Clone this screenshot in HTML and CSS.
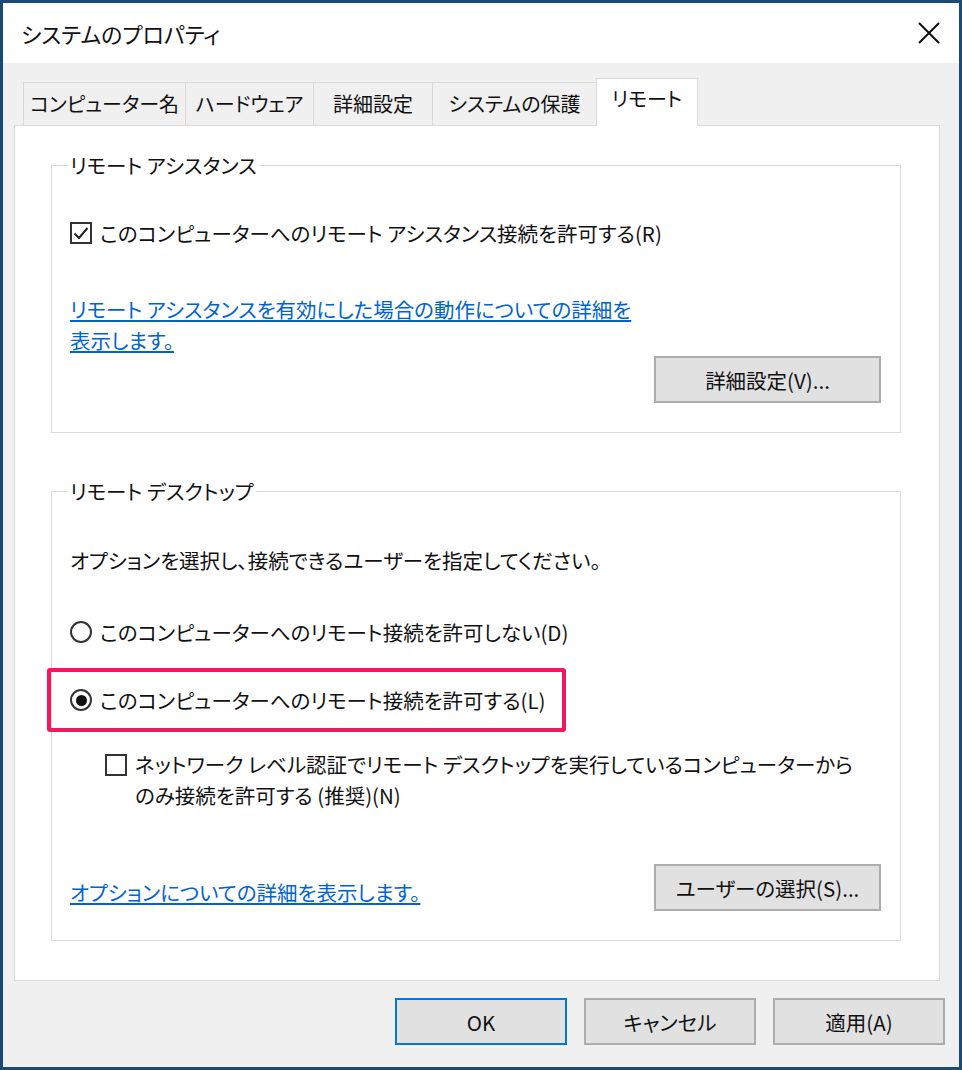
FILE: index.html
```html
<!DOCTYPE html>
<html lang="ja">
<head>
  <meta charset="UTF-8" />
  <title>システムのプロパティ</title>
  <link rel="stylesheet" href="styles.css">
</head>
<body>
  <div class="window">
    <div class="titlebar">
      <span class="title">システムのプロパティ</span>
      <svg class="close" width="24" height="24" viewBox="0 0 24 24">
        <path d="M2 2 L22 22 M22 2 L2 22" stroke="#111" stroke-width="2" fill="none" />
      </svg>
    </div>

    <div class="content">
      <div class="tabs">
        <div class="tab tab-name">コンピューター名</div>
        <div class="tab tab-hw">ハードウェア</div>
        <div class="tab tab-adv">詳細設定</div>
        <div class="tab tab-prot">システムの保護</div>
        <div class="tab tab-remote active">リモート</div>
      </div>

      <div class="panel">
        <fieldset class="group assist">
          <legend>リモート アシスタンス</legend>
          <label class="check-row">
            <span class="checkbox checked">
              <svg width="18" height="18" viewBox="0 0 18 18"><path d="M2.5 9.5 L7 14 L15.5 4" stroke="#222" stroke-width="2" fill="none" /></svg>
            </span>
            このコンピューターへのリモート アシスタンス接続を許可する(R)
          </label>
          <a class="link assist-link" href="#">リモート アシスタンスを有効にした場合の動作についての詳細を<br>表示します。</a>
          <div class="btn-row">
            <button class="btn">詳細設定(V)...</button>
          </div>
        </fieldset>

        <fieldset class="group desktop">
          <legend>リモート デスクトップ</legend>
          <p class="hint">オプションを選択し、接続できるユーザーを指定してください。</p>
          <label class="radio-row">
            <span class="radio"></span>
            このコンピューターへのリモート接続を許可しない(D)
          </label>
          <label class="radio-row marked">
            <span class="radio on"></span>
            このコンピューターへのリモート接続を許可する(L)
          </label>
          <label class="check-row nla">
            <span class="checkbox"></span>
            <span>ネットワーク レベル認証でリモート デスクトップを実行しているコンピューターから<br>のみ接続を許可する (推奨)(N)</span>
          </label>
          <div class="btn-row spread">
            <a class="link" href="#">オプションについての詳細を表示します。</a>
            <button class="btn">ユーザーの選択(S)...</button>
          </div>
        </fieldset>
      </div>

      <div class="footer">
        <button class="btn default">OK</button>
        <button class="btn">キャンセル</button>
        <button class="btn">適用(A)</button>
      </div>
    </div>
  </div>
</body>
</html>
```

FILE: styles.css
```css
* {
  box-sizing: border-box;
}

body {
  margin: 0;
  font-family: 'Noto Sans CJK JP', 'Noto Sans', sans-serif;
  font-feature-settings: 'palt';
  color: #111;
  background: #fff;
}

.window {
  width: 962px;
  height: 1070px;
  border: 3px solid #1b4a74;
  background: #f0f0f0;
  display: flex;
  flex-direction: column;
}

.titlebar {
  height: 60px;
  background: #fff;
  display: flex;
  align-items: center;
  justify-content: space-between;
  padding: 0 18px 0 18px;
}

.title {
  font-size: 22px;
}

.content {
  padding: 16px 19px 0 9px;
}

.tabs {
  display: flex;
  align-items: flex-end;
  height: 46px;
  padding-left: 11px;
}

.tab {
  height: 43px;
  line-height: 41px;
  text-align: center;
  font-size: 20px;
  border: 1px solid #d9d9d9;
  border-bottom: none;
  margin-right: -1px;
  background: #f0f0f0;
}

.tab-name { width: 163px; }
.tab-hw { width: 129px; }
.tab-adv { width: 120px; }
.tab-prot { width: 165px; }
.tab-remote { width: 102px; }

.tab.active {
  height: 48px;
  background: #fff;
  position: relative;
  z-index: 1;
  margin-bottom: -1px;
  line-height: 40px;
}

.panel {
  background: #fff;
  border: 1px solid #d9d9d9;
  height: 856px;
  margin-left: 2px;
  padding: 24px 38px 0 36px;
}

.group {
  border: 1px solid #dcdcdc;
  margin: 0;
  padding: 0 19px 0 18px;
  font-size: 20.5px;
}

.group legend {
  padding: 0 2px;
  margin-left: -2px;
}

.assist {
  height: 283px;
}

.desktop {
  height: 465px;
  margin-top: 43px;
}

.check-row, .radio-row {
  display: flex;
  align-items: center;
  gap: 8px;
}

.assist .check-row {
  margin-top: 38px;
}

.checkbox {
  width: 22px;
  height: 22px;
  border: 2px solid #333;
  display: inline-flex;
  align-items: center;
  justify-content: center;
  flex: none;
}

.radio {
  width: 22px;
  height: 22px;
  border: 2px solid #333;
  border-radius: 50%;
  display: inline-flex;
  align-items: center;
  justify-content: center;
  flex: none;
}

.radio.on::after {
  content: "";
  width: 11px;
  height: 11px;
  border-radius: 50%;
  background: #111;
}

.link {
  color: #0063d1;
  text-decoration: underline;
  line-height: 31px;
}

.assist-link {
  display: block;
  margin-top: 46px;
}

.btn-row {
  display: flex;
  justify-content: flex-end;
  margin-top: 0;
}

.btn {
  font-family: inherit;
  font-feature-settings: 'palt';
  font-size: 20.5px;
  color: #111;
  width: 227px;
  height: 47px;
  background: #e1e1e1;
  border: 2px solid #adadad;
}

.hint {
  margin: 39px 0 0;
}

.desktop .radio-row {
  margin-top: 42px;
}

.desktop .radio-row.marked {
  margin: 21px 0 0 -23px;
  width: 519px;
  height: 64px;
  padding-left: 19px;
  border: 4px solid #f5175e;
  border-radius: 3px;
}

.nla {
  align-items: flex-start;
  margin: 17px 0 0 35px;
  line-height: 31px;
}

.nla .checkbox {
  margin-top: 5px;
}

.spread {
  justify-content: space-between;
  align-items: center;
  margin-top: 53px;
}

.spread .link {
  margin-top: 10px;
}

.footer {
  display: flex;
  justify-content: flex-end;
  gap: 17px;
  padding: 17px 0 0;
  margin-right: -5px;
}

.footer .btn {
  width: 172px;
}

.footer .btn.default {
  border: 2px solid #0078d7;
}
```
